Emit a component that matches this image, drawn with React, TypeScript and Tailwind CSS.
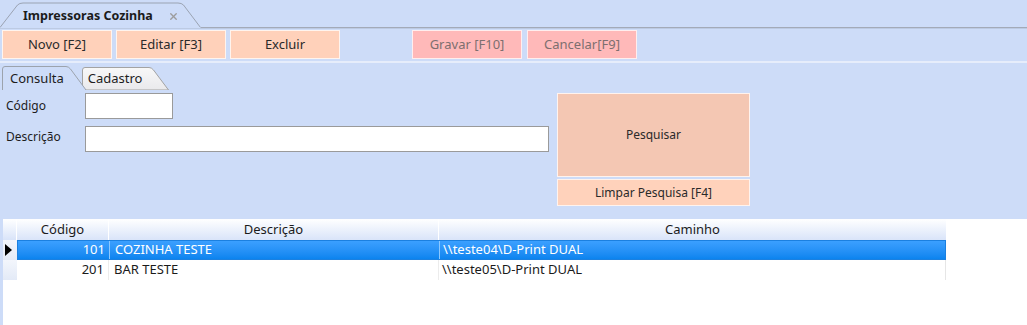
import { X } from 'lucide-react';

const toolbarButtons = [
    { label: 'Novo [F2]', enabled: true, spacing: '' },
    { label: 'Editar [F3]', enabled: true, spacing: '' },
    { label: 'Excluir', enabled: true, spacing: '' },
    { label: 'Gravar [F10]', enabled: false, spacing: 'ml-[68px]' },
    { label: 'Cancelar[F9]', enabled: false, spacing: 'ml-[1px]' },
];

const rows = [
    { codigo: '101', descricao: 'COZINHA TESTE', caminho: '\\\\teste04\\D-Print DUAL' },
    { codigo: '201', descricao: 'BAR TESTE', caminho: '\\\\teste05\\D-Print DUAL' },
];

function TopTab() {
    return (
        <div className="flex h-[28px] items-stretch">
            <div className="relative w-[201px] shrink-0">
                <svg className="absolute inset-0" width="201" height="28" viewBox="0 0 201 28">
                    <path d="M0 27.5 L17.5 5 Q19.5 3 23 3 L178 3 Q181.5 3 183.5 5 L200.5 27.5" fill="none" stroke="#9aa3b2" />
                </svg>
                <div className="relative flex h-full items-center pl-[23px] pt-[5px]">
                    <span className="font-bold text-[12.5px] text-[#1b1b1b]">Impressoras Cozinha</span>
                    <X className="ml-[15px] text-[#9c9c9c]" size={11} strokeWidth={3} />
                </div>
            </div>
            <div className="flex-1 border-b border-[#a3aab8]" />
        </div>
    );
}

function Toolbar() {
    return (
        <div className="border-t border-[#bccae3]">
            <div className="flex h-[32px] items-start gap-[4px] pl-[2px] pt-[1px]">
                {toolbarButtons.map((button) => (
                    <div
                        key={button.label}
                        className={`${button.spacing} flex h-[29px] w-[110px] items-center justify-center border text-[13px] ${
                            button.enabled
                                ? 'border-[#fff4ee] bg-[#ffd1ba] text-[#2a2a2a]'
                                : 'border-[#ffeeee] bg-[#ffb9b9] text-[#7d6f6f]'
                        }`}
                    >
                        {button.label}
                    </div>
                ))}
            </div>
            <div className="h-[2px] bg-[#e6edfb]" />
        </div>
    );
}

function InnerTabs() {
    return (
        <div className="relative mt-[2px] h-[25px] w-[170px]">
            <svg className="absolute inset-0" width="170" height="25" viewBox="0 0 170 25">
                <defs>
                    <linearGradient id="cadastroFill" x1="0" y1="0" x2="0" y2="1">
                        <stop offset="0" stopColor="#f8f8f8" />
                        <stop offset="1" stopColor="#e9e9ec" />
                    </linearGradient>
                </defs>
                <path d="M82.5 25 L82.5 5 Q82.5 2.5 85 2.5 L149 2.5 Q151.5 2.5 153.5 5 L168.5 25 Z" fill="url(#cadastroFill)" stroke="#a3a3a3" />
                <path d="M2.5 25 L2.5 4 Q2.5 1.5 5 1.5 L66 1.5 Q68.5 1.5 70.5 4 L86 25" fill="#cddcf8" stroke="#9ca3ad" />
            </svg>
            <div className="relative flex h-full items-center pt-[3px] text-[13px] text-[#1d1d1d]">
                <span className="ml-[10px]">Consulta</span>
                <span className="ml-[24px]">Cadastro</span>
            </div>
        </div>
    );
}

function SearchForm() {
    return (
        <div className="flex gap-[8px] pt-[3px]">
            <div className="flex w-[549px] flex-col gap-[7px] text-[12px] text-[#1d1d1d]">
                <div className="flex h-[26px] items-center">
                    <span className="w-[85px] pl-[6px]">Código</span>
                    <div className="h-full w-[88px] border border-[#9a9a9a] bg-white" />
                </div>
                <div className="flex h-[26px] items-center">
                    <span className="w-[85px] pb-[4px] pl-[6px]">Descrição</span>
                    <div className="h-full flex-1 border border-[#9a9a9a] bg-white" />
                </div>
            </div>
            <div className="flex w-[193px] flex-col gap-[2px] text-[12px] text-[#2a2a2a]">
                <div className="flex h-[84px] items-center justify-center border border-[#fff3ee] bg-[#f4c7b3]">
                    Pesquisar
                </div>
                <div className="flex h-[27px] items-center justify-center border border-[#fff3ee] bg-[#ffd2bb]">
                    Limpar Pesquisa [F4]
                </div>
            </div>
        </div>
    );
}

function ResultsGrid() {
    return (
        <div className="ml-[3px] mt-[13px] flex-1 bg-white text-[13px]">
            <div className="flex h-[21px] w-[943px] bg-gradient-to-b from-white to-[#d9e4f9] text-[#1b1b1b]">
                <div className="w-[14px] border-r border-white" />
                <div className="flex w-[92px] items-center justify-center border-r border-white">Código</div>
                <div className="flex w-[330px] items-center justify-center border-r border-white">Descrição</div>
                <div className="flex flex-1 items-center justify-center">Caminho</div>
            </div>
            {rows.map((row, index) => {
                const selected = index === 0;
                return (
                    <div key={row.codigo} className="flex h-[20px] w-[943px]">
                        <div className="flex w-[14px] items-center bg-gradient-to-b from-[#f3f6fc] to-[#e3eaf7] pl-[2px]">
                            {selected && (
                                <svg width="8" height="12" viewBox="0 0 8 12">
                                    <path d="M0 0 L7 6 L0 12 Z" fill="#000" />
                                </svg>
                            )}
                        </div>
                        <div
                            className={`flex flex-1 ${
                                selected
                                    ? 'border border-[#1b80e0] bg-gradient-to-b from-[#3ba0ff] to-[#0a84ef] text-white'
                                    : 'border-r border-[#e6e6e6] text-[#1b1b1b]'
                            }`}
                        >
                            <div
                                className={`flex w-[92px] items-center justify-end border-r pr-[4px] ${
                                    selected ? 'border-[#8cc8ff]' : 'border-[#ececec]'
                                }`}
                            >
                                {row.codigo}
                            </div>
                            <div
                                className={`flex w-[330px] items-center border-r pl-[5px] ${
                                    selected ? 'border-[#8cc8ff]' : 'border-[#ececec]'
                                }`}
                            >
                                {row.descricao}
                            </div>
                            <div className="flex flex-1 items-center pl-[3px]">{row.caminho}</div>
                        </div>
                    </div>
                );
            })}
        </div>
    );
}

export default function App() {
    return (
        <div className="flex h-[325px] w-[1027px] flex-col overflow-hidden bg-[#cddcf8] font-['Noto_Sans',sans-serif]">
            <TopTab />
            <Toolbar />
            <InnerTabs />
            <SearchForm />
            <ResultsGrid />
        </div>
    );
}
